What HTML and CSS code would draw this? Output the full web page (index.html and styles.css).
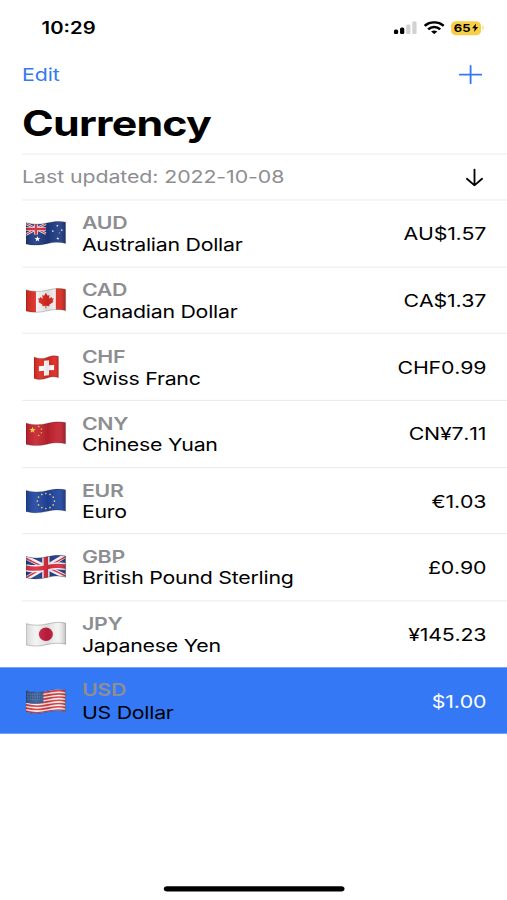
FILE: index.html
```html
<!DOCTYPE html>
<html lang="en">

<head>
  <meta charset="utf-8">
  <title>Currency</title>
  <link rel="stylesheet" href="styles.css">
</head>

<body>
  <!-- shared flag outline, shading and star -->
  <svg class="defs" width="0" height="0">
    <defs>
      <clipPath id="wave">
        <path d="M0 2C8 4 14 4 21 2.3S34 0 40 1.5V23C34 21.3 28 21.6 21 23.3S8 25.4 0 23.5Z"/>
      </clipPath>
      <clipPath id="wave-small">
        <path d="M0 2C5 4 9 4 13 2.3S21 0 25 1.5V23C21 21.3 17 21.6 13 23.3S5 25.4 0 23.5Z"/>
      </clipPath>
      <linearGradient id="shade">
        <stop offset="0" stop-color="#000" stop-opacity=".12"/>
        <stop offset=".25" stop-color="#fff" stop-opacity=".08"/>
        <stop offset=".55" stop-color="#000" stop-opacity=".1"/>
        <stop offset=".8" stop-color="#fff" stop-opacity=".06"/>
        <stop offset="1" stop-color="#000" stop-opacity=".22"/>
      </linearGradient>
      <path id="star" d="M0-1 .25-.35 .95-.31 .4 .13 .59 .81 0 .43-.59 .81-.4 .13-.95-.31-.25-.35Z"/>
      <g id="edge" fill="none">
        <path d="M0 2C8 4 14 4 21 2.3S34 0 40 1.5V23C34 21.3 28 21.6 21 23.3S8 25.4 0 23.5Z" fill="url(#shade)" stroke="#000" stroke-opacity=".22" stroke-width="1"/>
      </g>
    </defs>
  </svg>

  <div class="screen">
    <header class="status">
      <span class="time">10:29</span>
      <div class="indicators">
        <svg class="signal" viewBox="0 0 23 13" preserveAspectRatio="none">
          <rect x="0" y="8.4" width="4.3" height="4.6" rx="1.6"/>
          <rect x="6.2" y="6.2" width="4.3" height="6.8" rx="1.6"/>
          <rect x="12.4" y="3.2" width="4.3" height="9.8" rx="1.4" fill="#d2d2d2"/>
          <rect x="18.6" y="0" width="4.3" height="13" rx="1.4" fill="#d2d2d2"/>
        </svg>
        <svg class="wifi" viewBox="0 0 20 13" preserveAspectRatio="none">
          <g fill="none" stroke="#000" stroke-width="2.5">
            <path d="M.8 4.7C6-.4 14-.4 19.2 4.7"/>
            <path d="M4.2 8.2C7.5 5 12.5 5 15.8 8.2"/>
          </g>
          <path d="M7 10.4C8.8 8.8 11.2 8.8 13 10.4L10 13Z"/>
        </svg>
        <div class="battery">
          <span>65</span>
          <svg class="bolt" viewBox="0 0 6 9" preserveAspectRatio="none"><path d="M3.8 0 .2 5H2.6L2 9 5.8 3.8H3.4Z"/></svg>
        </div>
        <i class="cap"></i>
      </div>
    </header>

    <nav class="nav">
      <a class="edit">Edit</a>
      <svg class="add" viewBox="0 0 24 20" preserveAspectRatio="none"><path d="M12 1V19M1 10H23" fill="none" stroke="#3478f6" stroke-width="1.9" stroke-linecap="round"/></svg>
    </nav>
    <h1>Currency</h1>

    <div class="updated">
      <span>Last updated: 2022-10-08</span>
      <svg class="arrow" viewBox="0 0 18 18" preserveAspectRatio="none"><path d="M9 1V16.6M1.5 10.2 9 16.8 16.5 10.2" fill="none" stroke="#000" stroke-width="1.8" stroke-linecap="round" stroke-linejoin="round"/></svg>
    </div>

    <ul class="rates">
      <li class="rate">
        <svg class="flag" viewBox="0 0 40 26" preserveAspectRatio="none">
          <g clip-path="url(#wave)">
            <rect width="40" height="26" fill="#1d3a82"/>
            <path d="M0 3 20 13M20 3 0 14" stroke="#e9e4ee" stroke-width="2.6"/>
            <path d="M0 3 20 13M20 3 0 14" stroke="#cf2f40" stroke-width="1"/>
            <path d="M10 2V14M0 8.5H20" stroke="#e9e4ee" stroke-width="4"/>
            <path d="M10 2V14M0 8.5H20" stroke="#d8283a" stroke-width="2.4"/>
            <g fill="#fff">
              <use href="#star" transform="translate(11.5 18.6) scale(3)"/>
              <use href="#star" transform="translate(31.5 5) scale(1.3)"/>
              <use href="#star" transform="translate(27 10.5) scale(1.3)"/>
              <use href="#star" transform="translate(36 9.5) scale(1.3)"/>
              <use href="#star" transform="translate(32 18) scale(1.5)"/>
              <use href="#star" transform="translate(33.5 12.5) scale(.7)"/>
            </g>
          </g>
          <use href="#edge"/>
        </svg>
        <div class="currency"><b>AUD</b><span>Australian Dollar</span></div>
        <span class="value">AU$1.57</span>
      </li>
      <li class="rate">
        <svg class="flag" viewBox="0 0 40 26" preserveAspectRatio="none">
          <g clip-path="url(#wave)">
            <rect width="40" height="26" fill="#f3f3f3"/>
            <path d="M0 0H10V26H0ZM30 0H40V26H30Z" fill="#dc2a20"/>
            <path d="M20 5 21.8 8 23.6 7.2 23.2 11 25.6 9.2 26.3 10.7 28 10.6 26.8 13.2 27.8 14 23.4 17.2 23.6 18.6 20.4 18.1V21H19.6V18.1L16.4 18.6 16.6 17.2 12.2 14 13.2 13.2 12 10.6 13.7 10.7 14.4 9.2 16.8 11 16.4 7.2 18.2 8Z" fill="#dc2a20"/>
          </g>
          <use href="#edge"/>
        </svg>
        <div class="currency"><b>CAD</b><span>Canadian Dollar</span></div>
        <span class="value">CA$1.37</span>
      </li>
      <li class="rate">
        <svg class="flag square" viewBox="0 0 25 26" preserveAspectRatio="none">
          <g clip-path="url(#wave-small)">
            <rect width="25" height="26" fill="#dc2820"/>
            <path d="M10 5.7 15 5.2V10.4L20 10V15L15 15.4V20.4L10 20.9V15.9L5 16.3V11.2L10 10.8Z" fill="#fff"/>
          </g>
          <path d="M0 2C5 4 9 4 13 2.3S21 0 25 1.5V23C21 21.3 17 21.6 13 23.3S5 25.4 0 23.5Z" fill="url(#shade)" stroke="#000" stroke-opacity=".22"/>
        </svg>
        <div class="currency"><b>CHF</b><span>Swiss Franc</span></div>
        <span class="value">CHF0.99</span>
      </li>
      <li class="rate">
        <svg class="flag" viewBox="0 0 40 26" preserveAspectRatio="none">
          <g clip-path="url(#wave)">
            <rect width="40" height="26" fill="#c4222f"/>
            <g fill="#fbd335">
              <use href="#star" transform="translate(6.5 9) scale(3.4)"/>
              <use href="#star" transform="translate(12.8 5.3) scale(1.2)"/>
              <use href="#star" transform="translate(15.5 8) scale(1.2)"/>
              <use href="#star" transform="translate(15.5 11.8) scale(1.2)"/>
              <use href="#star" transform="translate(12.8 14.4) scale(1.2)"/>
            </g>
          </g>
          <use href="#edge"/>
        </svg>
        <div class="currency"><b>CNY</b><span>Chinese Yuan</span></div>
        <span class="value">CN¥7.11</span>
      </li>
      <li class="rate">
        <svg class="flag" viewBox="0 0 40 26" preserveAspectRatio="none">
          <g clip-path="url(#wave)">
            <rect width="40" height="26" fill="#20459f"/>
            <ellipse cx="20" cy="12.8" rx="8.6" ry="7.6" fill="none" stroke="#e5d67a" stroke-width="1.7" stroke-linecap="round" pathLength="120" stroke-dasharray=".1 9.9"/>
          </g>
          <use href="#edge"/>
        </svg>
        <div class="currency"><b>EUR</b><span>Euro</span></div>
        <span class="value">€1.03</span>
      </li>
      <li class="rate">
        <svg class="flag" viewBox="0 0 40 26" preserveAspectRatio="none">
          <g clip-path="url(#wave)">
            <rect width="40" height="26" fill="#1f3c86"/>
            <path d="M0 3 40 22.5M40 1 0 24.5" stroke="#f4f2f5" stroke-width="4.6"/>
            <path d="M0 4 20 13.8M40 22 20 12M40 2 20 13.6M0 23.5 20 12" stroke="#d32a3d" stroke-width="1.4"/>
            <path d="M20 0V26M0 13.4C8 15 14 14.5 20 13S33 11 40 12.2" fill="none" stroke="#f4f2f5" stroke-width="7.4"/>
            <path d="M20 0V26M0 13.4C8 15 14 14.5 20 13S33 11 40 12.2" fill="none" stroke="#d92c3e" stroke-width="4.4"/>
          </g>
          <use href="#edge"/>
        </svg>
        <div class="currency"><b>GBP</b><span>British Pound Sterling</span></div>
        <span class="value">£0.90</span>
      </li>
      <li class="rate">
        <svg class="flag" viewBox="0 0 40 26" preserveAspectRatio="none">
          <g clip-path="url(#wave)">
            <rect width="40" height="26" fill="#f3f3f3"/>
            <ellipse cx="20" cy="12.8" rx="7" ry="6.8" fill="#c51e3d"/>
          </g>
          <use href="#edge"/>
        </svg>
        <div class="currency"><b>JPY</b><span>Japanese Yen</span></div>
        <span class="value">¥145.23</span>
      </li>
      <li class="rate selected">
        <svg class="flag" viewBox="0 0 40 26" preserveAspectRatio="none">
          <g clip-path="url(#wave)">
            <rect width="40" height="26" fill="#f5efef"/>
            <g fill="none" stroke="#d8393f" stroke-width="1.65">
              <path id="stripe" d="M0 3C8 5 14 5 21 3.3S34 1 40 2.5"/>
              <use href="#stripe" y="3.3"/>
              <use href="#stripe" y="6.6"/>
              <use href="#stripe" y="9.9"/>
              <use href="#stripe" y="13.2"/>
              <use href="#stripe" y="16.5"/>
              <use href="#stripe" y="19.8"/>
            </g>
            <path d="M0 0H17.5V14C12 15.3 6 15.3 0 14Z" fill="#315a94"/>
            <path d="M1.5 5.4H17M1.5 8.2H17M1.5 11H17" stroke="#a9bdd8" stroke-width=".6" stroke-dasharray=".8 1.6"/>
          </g>
          <use href="#edge"/>
        </svg>
        <div class="currency"><b>USD</b><span>US Dollar</span></div>
        <span class="value">$1.00</span>
      </li>
    </ul>

    <div class="home"></div>
  </div>
</body>

</html>
```

FILE: styles.css
```css
html,
body {
  margin: 0;
  height: 100%;
  overflow: hidden;
  background: #fff;
}

.defs {
  display: block;
}

/* 390x844 phone layout, stretched over the window */
.screen {
  display: flex;
  flex-direction: column;
  width: 390px;
  height: 844px;
  transform: scale(1.3, 1.0664);
  transform-origin: 0 0;
  font-family: Inter, "Liberation Sans", sans-serif;
  font-size: 16.4px;
  color: #000;
  white-space: nowrap;
}

.status {
  display: flex;
  justify-content: space-between;
  align-items: center;
  height: 51px;
  padding: 1px 18px 0 32px;
  box-sizing: border-box;
}

.time {
  font-size: 15.6px;
  font-weight: 600;
}

.indicators {
  display: flex;
  align-items: center;
}

.signal {
  width: 17.5px;
  height: 12px;
  margin-right: 5px;
}

.wifi {
  width: 16px;
  height: 12px;
  margin-right: 5.5px;
}

.battery {
  display: flex;
  align-items: center;
  justify-content: center;
  gap: 1px;
  width: 23px;
  height: 13px;
  border-radius: 4px;
  background: #f8ce46;
  font-size: 10px;
  font-weight: 700;
}

.bolt {
  width: 5px;
  height: 8px;
}

.cap {
  width: 1.2px;
  height: 4px;
  margin-left: .8px;
  border-radius: 0 2px 2px 0;
  background: #f9dc85;
}

.nav {
  display: flex;
  justify-content: space-between;
  align-items: center;
  height: 38px;
  padding: 0 18.8px 0 17px;
}

.edit {
  letter-spacing: -.1px;
  color: #3478f6;
}

.add {
  width: 18px;
  height: 18px;
}

h1 {
  height: 54.6px;
  margin: 0;
  padding-left: 17px;
  font-size: 33px;
  font-weight: 700;
  line-height: 55px;
  letter-spacing: -.6px;
}

.updated {
  display: flex;
  justify-content: space-between;
  align-items: center;
  height: 43.6px;
  margin-left: 17px;
  padding: 1px 18px 0 0;
  border-top: 1px solid #ececee;
  box-sizing: border-box;
  letter-spacing: -.06px;
  color: #8e8e92;
}

.arrow {
  width: 14px;
  height: 17px;
}

.rates {
  margin: 0;
  padding: 0;
  list-style: none;
}

.rate {
  display: flex;
  align-items: center;
  height: 62.65px;
  margin-left: 17px;
  padding: .5px 16px 0 3px;
  border-top: 1px solid #ececee;
  box-sizing: border-box;
}

.flag {
  width: 30.6px;
  height: 24px;
  margin-right: 12.4px;
}

.square {
  width: 19.5px;
  margin: 0 18px 0 5.5px;
}

.currency {
  display: flex;
  flex: 1;
  flex-direction: column;
  line-height: 20.3px;
  letter-spacing: -.19px;
}

.currency b {
  font-weight: 600;
  color: #8e8e92;
}

.value {
  font-kerning: none;
  letter-spacing: -.15px;
}

.selected {
  margin-left: 0;
  padding-left: 20px;
  border-top-color: #3478f6;
  background: #3478f6;
}

.selected .value {
  color: #fff;
}

.home {
  width: 139px;
  height: 5px;
  margin: auto auto 8px 126px;
  border-radius: 3px;
  background: #000;
}
```
